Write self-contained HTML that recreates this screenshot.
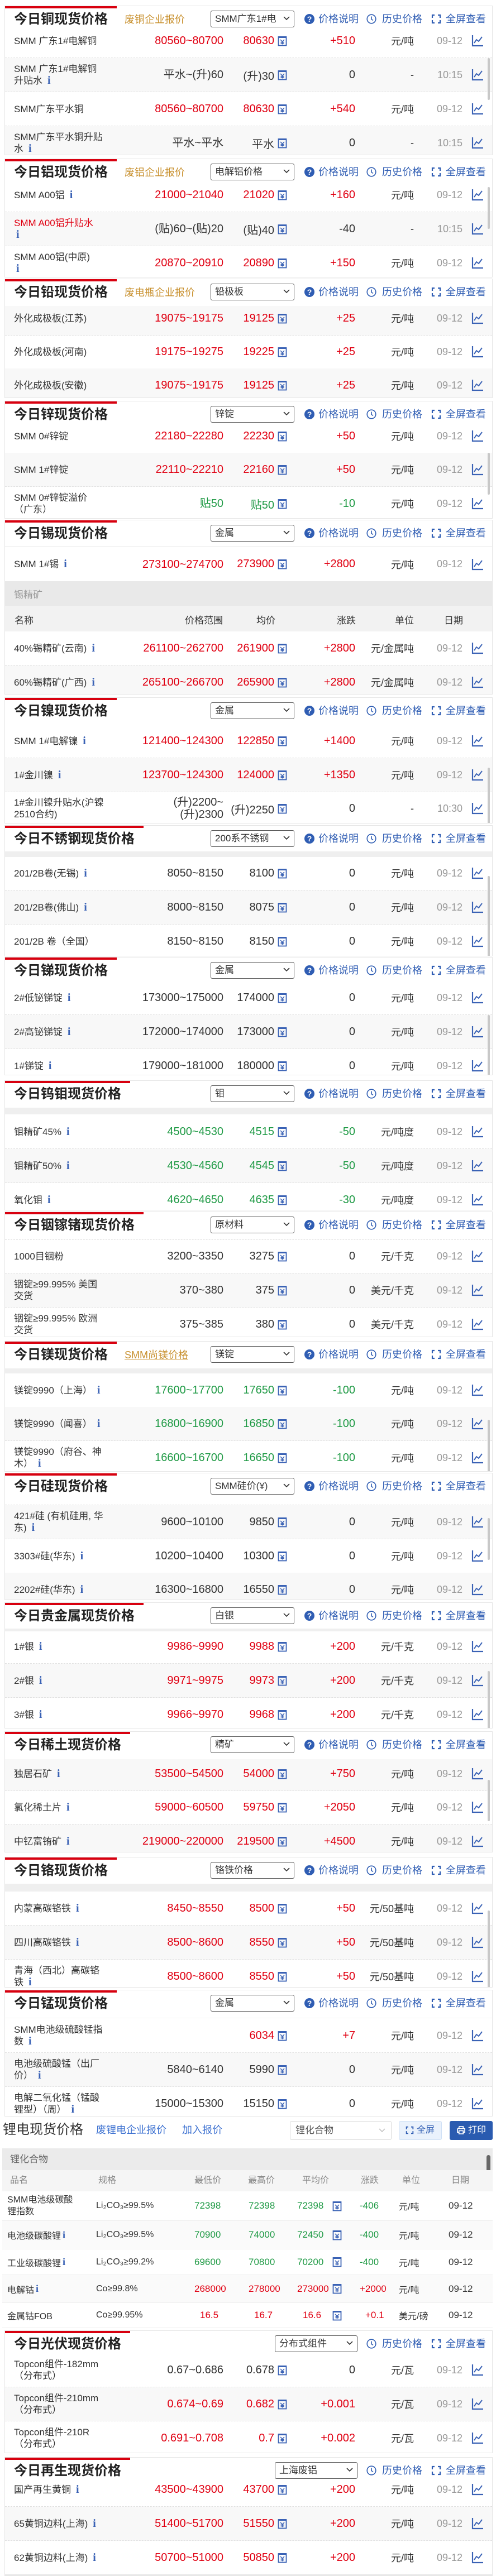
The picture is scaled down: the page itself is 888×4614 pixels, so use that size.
<!DOCTYPE html>
<html><head><meta charset="utf-8">
<style>
body{margin:0;width:888px;height:4614px;position:relative;background:#fff;font-family:"Liberation Sans","Noto Sans CJK SC",sans-serif;color:#333;overflow:hidden}
.s{position:absolute;left:8px;width:874px;border:1px solid #e6e6e6;box-sizing:border-box;overflow:hidden;background:#fff}
.rb{position:absolute;left:0;top:0;height:4px;background:#d8000f;z-index:3}
.h{position:absolute;left:0;top:0;width:100%;background:#fff;z-index:2}
.ti{position:absolute;left:16px;top:8px;font-size:24px;font-weight:bold;line-height:32px;color:#222;white-space:nowrap}
.ol{position:absolute;left:214px;top:12px;font-size:18px;color:#c8902e;line-height:24px;white-space:nowrap}
.sel{position:absolute;left:368px;top:8px;width:150px;height:30px;border:1px solid #555;border-radius:3px;box-sizing:border-box;font-size:17px;line-height:28px;padding-left:7px;overflow:hidden;white-space:nowrap;background:#fff}
.sel svg{position:absolute;right:7px;top:9px}
.hl{position:absolute;top:11px;font-size:18px;line-height:24px;color:#2f5db3;white-space:nowrap}
.hi{position:absolute;top:14px}
.band{position:absolute;left:0;width:100%;background:#efefef;z-index:1}
.r{position:absolute;left:0;width:100%;height:61px;border-bottom:1px dashed #e0e0e0;box-sizing:border-box}
.gr{background:#f8f8f8}
.c{position:absolute;top:0;height:100%;display:flex;align-items:center;white-space:nowrap}
.n{left:16px;font-size:17px;line-height:21px}
.g{right:481px;font-size:20px;text-align:right;line-height:22px}
.a{right:390px;font-size:20px}
.k{left:488px}
.d{right:245px;font-size:20px}
.u{right:140px;font-size:18px}
.t{right:53px;font-size:18px;color:#999}
.ch{left:835px}
.up .g,.up .a,.up .d{color:#e00012}
.dn .g,.dn .a,.dn .d{color:#1f9a45}
.i{font-family:"Liberation Serif",serif;font-weight:bold;color:#3a62b5;font-size:20px;margin-left:9px}
.red{color:#e00012}
.sb{position:absolute;right:4px;width:4px;background:#c8c8c8;border-radius:2px;z-index:3}
.ab{position:absolute;white-space:nowrap}
</style></head><body>
<svg width="0" height="0" style="position:absolute">
<defs>
<symbol id="cal" viewBox="0 0 17 19"><rect x="1.5" y="2" width="14" height="15.5" fill="none" stroke="#3a62b5" stroke-width="1.8"/><rect x="1.5" y="1" width="14" height="3" fill="#3a62b5"/><path d="M5 7 L8.5 10.5 L12 7 M8.5 10.5 V15.5 M5.5 11.5 H11.5 M5.5 13.5 H11.5" stroke="#3a62b5" stroke-width="1.5" fill="none"/></symbol>
<symbol id="chr" viewBox="0 0 22 22"><path d="M2 1 V20 H21" stroke="#3a62b5" stroke-width="2.2" fill="none"/><path d="M5 15 L9 9 L13 12 L19 4" stroke="#3a62b5" stroke-width="2" fill="none"/></symbol>
<symbol id="q" viewBox="0 0 18 18"><circle cx="9" cy="9" r="9" fill="#2f5db3"/><text x="9" y="14" text-anchor="middle" font-size="14" font-weight="bold" fill="#fff" font-family="Liberation Sans">?</text></symbol>
<symbol id="clk" viewBox="0 0 18 18"><circle cx="9" cy="9" r="7.8" fill="none" stroke="#2f5db3" stroke-width="1.6"/><path d="M9 4.5 V9.5 L12 11.5" stroke="#2f5db3" stroke-width="1.6" fill="none"/></symbol>
<symbol id="fs" viewBox="0 0 18 18"><path d="M2 7 V2 H6 M12 2 H16 V7 M16 11 V16 H12 M6 16 H2 V11" stroke="#2f5db3" stroke-width="2.2" fill="none"/></symbol>
<symbol id="chev" viewBox="0 0 12 8"><path d="M1 1 L6 6 L11 1" stroke="#333" stroke-width="1.6" fill="none"/></symbol>
</defs></svg>

<!-- 1 copper -->
<div class="s" style="top:10px;height:268px">
<div class="rb" style="width:200px"></div>
<div class="h" style="height:47px"><div class="ti">今日铜现货价格</div><div class="ol">废铜企业报价</div><div class="sel">SMM广东1#电<svg width="12" height="8"><use href="#chev"/></svg></div>
<svg class="hi" style="left:536px" width="18" height="18"><use href="#q"/></svg><div class="hl" style="left:561px">价格说明</div><svg class="hi" style="left:647px" width="18" height="18"><use href="#clk"/></svg><div class="hl" style="left:675px">历史价格</div><svg class="hi" style="left:763px" width="18" height="18"><use href="#fs"/></svg><div class="hl" style="left:789px">全屏查看</div></div>
<div class="sb" style="top:93px;height:75px"></div>
<div class="r up" style="top:32px"><div class="c n"><span>SMM 广东1#电解铜</span></div><div class="c g">80560~80700</div><div class="c a">80630</div><div class="c k"><svg width="17" height="19"><use href="#cal"/></svg></div><div class="c d">+510</div><div class="c u">元/吨</div><div class="c t">09-12</div><div class="c ch"><svg width="22" height="22"><use href="#chr"/></svg></div></div>
<div class="r gr" style="top:93px"><div class="c n"><span>SMM 广东1#电解铜<br>升贴水<b class="i">i</b></span></div><div class="c g">平水~(升)60</div><div class="c a">(升)30</div><div class="c k"><svg width="17" height="19"><use href="#cal"/></svg></div><div class="c d">0</div><div class="c u">-</div><div class="c t">10:15</div><div class="c ch"><svg width="22" height="22"><use href="#chr"/></svg></div></div>
<div class="r up" style="top:154px"><div class="c n"><span>SMM广东平水铜</span></div><div class="c g">80560~80700</div><div class="c a">80630</div><div class="c k"><svg width="17" height="19"><use href="#cal"/></svg></div><div class="c d">+540</div><div class="c u">元/吨</div><div class="c t">09-12</div><div class="c ch"><svg width="22" height="22"><use href="#chr"/></svg></div></div>
<div class="r gr" style="top:215px"><div class="c n"><span>SMM广东平水铜升贴<br>水<b class="i">i</b></span></div><div class="c g">平水~平水</div><div class="c a">平水</div><div class="c k"><svg width="17" height="19"><use href="#cal"/></svg></div><div class="c d">0</div><div class="c u">-</div><div class="c t">10:15</div><div class="c ch"><svg width="22" height="22"><use href="#chr"/></svg></div></div>
</div>

<!-- 2 aluminium -->
<div class="s" style="top:284px;height:213px">
<div class="rb" style="width:200px"></div>
<div class="h" style="height:47px"><div class="ti">今日铝现货价格</div><div class="ol">废铝企业报价</div><div class="sel">电解铝价格<svg width="12" height="8"><use href="#chev"/></svg></div>
<svg class="hi" style="left:536px" width="18" height="18"><use href="#q"/></svg><div class="hl" style="left:561px">价格说明</div><svg class="hi" style="left:647px" width="18" height="18"><use href="#clk"/></svg><div class="hl" style="left:675px">历史价格</div><svg class="hi" style="left:763px" width="18" height="18"><use href="#fs"/></svg><div class="hl" style="left:789px">全屏查看</div></div>
<div class="sb" style="top:50px;height:75px"></div>
<div class="r up" style="top:34px"><div class="c n"><span>SMM A00铝<b class="i">i</b></span></div><div class="c g">21000~21040</div><div class="c a">21020</div><div class="c k"><svg width="17" height="19"><use href="#cal"/></svg></div><div class="c d">+160</div><div class="c u">元/吨</div><div class="c t">09-12</div><div class="c ch"><svg width="22" height="22"><use href="#chr"/></svg></div></div>
<div class="r gr" style="top:95px"><div class="c n"><span><span class="red">SMM A00铝升贴水</span><br><b class="i" style="margin-left:4px">i</b></span></div><div class="c g">(贴)60~(贴)20</div><div class="c a">(贴)40</div><div class="c k"><svg width="17" height="19"><use href="#cal"/></svg></div><div class="c d">-40</div><div class="c u">-</div><div class="c t">10:15</div><div class="c ch"><svg width="22" height="22"><use href="#chr"/></svg></div></div>
<div class="r up" style="top:156px"><div class="c n"><span>SMM A00铝(中原)<br><b class="i" style="margin-left:4px">i</b></span></div><div class="c g">20870~20910</div><div class="c a">20890</div><div class="c k"><svg width="17" height="19"><use href="#cal"/></svg></div><div class="c d">+150</div><div class="c u">元/吨</div><div class="c t">09-12</div><div class="c ch"><svg width="22" height="22"><use href="#chr"/></svg></div></div>
</div>

<!-- 3 lead -->
<div class="s" style="top:499px;height:214px">
<div class="rb" style="width:200px"></div>
<div class="h" style="height:48px"><div class="ti">今日铅现货价格</div><div class="ol">废电瓶企业报价</div><div class="sel">铅极板<svg width="12" height="8"><use href="#chev"/></svg></div>
<svg class="hi" style="left:536px" width="18" height="18"><use href="#q"/></svg><div class="hl" style="left:561px">价格说明</div><svg class="hi" style="left:647px" width="18" height="18"><use href="#clk"/></svg><div class="hl" style="left:675px">历史价格</div><svg class="hi" style="left:763px" width="18" height="18"><use href="#fs"/></svg><div class="hl" style="left:789px">全屏查看</div></div>
<div class="r up gr" style="top:40px"><div class="c n"><span>外化成极板(江苏)</span></div><div class="c g">19075~19175</div><div class="c a">19125</div><div class="c k"><svg width="17" height="19"><use href="#cal"/></svg></div><div class="c d">+25</div><div class="c u">元/吨</div><div class="c t">09-12</div><div class="c ch"><svg width="22" height="22"><use href="#chr"/></svg></div></div>
<div class="r up" style="top:100px"><div class="c n"><span>外化成极板(河南)</span></div><div class="c g">19175~19275</div><div class="c a">19225</div><div class="c k"><svg width="17" height="19"><use href="#cal"/></svg></div><div class="c d">+25</div><div class="c u">元/吨</div><div class="c t">09-12</div><div class="c ch"><svg width="22" height="22"><use href="#chr"/></svg></div></div>
<div class="r up gr" style="top:160px"><div class="c n"><span>外化成极板(安徽)</span></div><div class="c g">19075~19175</div><div class="c a">19125</div><div class="c k"><svg width="17" height="19"><use href="#cal"/></svg></div><div class="c d">+25</div><div class="c u">元/吨</div><div class="c t">09-12</div><div class="c ch"><svg width="22" height="22"><use href="#chr"/></svg></div></div>
</div>

<!-- 4 zinc -->
<div class="s" style="top:718px;height:211px">
<div class="rb" style="width:200px"></div>
<div class="h" style="height:42px"><div class="ti">今日锌现货价格</div><div class="sel">锌锭<svg width="12" height="8"><use href="#chev"/></svg></div>
<svg class="hi" style="left:536px" width="18" height="18"><use href="#q"/></svg><div class="hl" style="left:561px">价格说明</div><svg class="hi" style="left:647px" width="18" height="18"><use href="#clk"/></svg><div class="hl" style="left:675px">历史价格</div><svg class="hi" style="left:763px" width="18" height="18"><use href="#fs"/></svg><div class="hl" style="left:789px">全屏查看</div></div>
<div class="sb" style="top:92px;height:75px"></div>
<div class="r up" style="top:32px"><div class="c n"><span>SMM 0#锌锭</span></div><div class="c g">22180~22280</div><div class="c a">22230</div><div class="c k"><svg width="17" height="19"><use href="#cal"/></svg></div><div class="c d">+50</div><div class="c u">元/吨</div><div class="c t">09-12</div><div class="c ch"><svg width="22" height="22"><use href="#chr"/></svg></div></div>
<div class="r up gr" style="top:92px"><div class="c n"><span>SMM 1#锌锭</span></div><div class="c g">22110~22210</div><div class="c a">22160</div><div class="c k"><svg width="17" height="19"><use href="#cal"/></svg></div><div class="c d">+50</div><div class="c u">元/吨</div><div class="c t">09-12</div><div class="c ch"><svg width="22" height="22"><use href="#chr"/></svg></div></div>
<div class="r dn" style="top:153px"><div class="c n"><span>SMM 0#锌锭溢价<br>（广东）</span></div><div class="c g">贴50</div><div class="c a">贴50</div><div class="c k"><svg width="17" height="19"><use href="#cal"/></svg></div><div class="c d">-10</div><div class="c u">元/吨</div><div class="c t">09-12</div><div class="c ch"><svg width="22" height="22"><use href="#chr"/></svg></div></div>
</div>

<!-- 5 tin -->
<div class="s" style="top:931px;height:313px">
<div class="rb" style="width:200px"></div>
<div class="h" style="height:46px;border-bottom:1px solid #eee"><div class="ti">今日锡现货价格</div><div class="sel">金属<svg width="12" height="8"><use href="#chev"/></svg></div>
<svg class="hi" style="left:536px" width="18" height="18"><use href="#q"/></svg><div class="hl" style="left:561px">价格说明</div><svg class="hi" style="left:647px" width="18" height="18"><use href="#clk"/></svg><div class="hl" style="left:675px">历史价格</div><svg class="hi" style="left:763px" width="18" height="18"><use href="#fs"/></svg><div class="hl" style="left:789px">全屏查看</div></div>
<div class="r up" style="top:48px;border:none"><div class="c n"><span>SMM 1#锡<b class="i">i</b></span></div><div class="c g">273100~274700</div><div class="c a">273900</div><div class="c k"><svg width="17" height="19"><use href="#cal"/></svg></div><div class="c d">+2800</div><div class="c u">元/吨</div><div class="c t">09-12</div><div class="c ch"><svg width="22" height="22"><use href="#chr"/></svg></div></div>
<div class="band" style="top:109px;height:44px;background:#e9e9e9"><span class="ab" style="left:16px;top:10px;font-size:17px;color:#999">锡精矿</span></div>
<div class="band" style="top:153px;height:46px;background:#f2f2f2;font-size:17px"><span class="ab" style="left:17px;top:12px">名称</span><span class="ab" style="left:322px;top:12px">价格范围</span><span class="ab" style="left:450px;top:12px">均价</span><span class="ab" style="left:594px;top:12px">涨跌</span><span class="ab" style="left:698px;top:12px">单位</span><span class="ab" style="left:786px;top:12px">日期</span></div>
<div class="r up" style="top:199px"><div class="c n"><span>40%锡精矿(云南)<b class="i">i</b></span></div><div class="c g">261100~262700</div><div class="c a">261900</div><div class="c k"><svg width="17" height="19"><use href="#cal"/></svg></div><div class="c d">+2800</div><div class="c u">元/金属吨</div><div class="c t">09-12</div><div class="c ch"><svg width="22" height="22"><use href="#chr"/></svg></div></div>
<div class="r up gr" style="top:260px"><div class="c n"><span>60%锡精矿(广西)<b class="i">i</b></span></div><div class="c g">265100~266700</div><div class="c a">265900</div><div class="c k"><svg width="17" height="19"><use href="#cal"/></svg></div><div class="c d">+2800</div><div class="c u">元/金属吨</div><div class="c t">09-12</div><div class="c ch"><svg width="22" height="22"><use href="#chr"/></svg></div></div>
</div>

<!-- 6 nickel -->
<div class="s" style="top:1249px;height:226px">
<div class="rb" style="width:200px"></div>
<div class="h" style="height:47px"><div class="ti">今日镍现货价格</div><div class="sel">金属<svg width="12" height="8"><use href="#chev"/></svg></div>
<svg class="hi" style="left:536px" width="18" height="18"><use href="#q"/></svg><div class="hl" style="left:561px">价格说明</div><svg class="hi" style="left:647px" width="18" height="18"><use href="#clk"/></svg><div class="hl" style="left:675px">历史价格</div><svg class="hi" style="left:763px" width="18" height="18"><use href="#fs"/></svg><div class="hl" style="left:789px">全屏查看</div></div>
<div class="sb" style="top:125px;height:101px"></div>
<div class="r up" style="top:47px"><div class="c n"><span>SMM 1#电解镍<b class="i">i</b></span></div><div class="c g">121400~124300</div><div class="c a">122850</div><div class="c k"><svg width="17" height="19"><use href="#cal"/></svg></div><div class="c d">+1400</div><div class="c u">元/吨</div><div class="c t">09-12</div><div class="c ch"><svg width="22" height="22"><use href="#chr"/></svg></div></div>
<div class="r up gr" style="top:108px"><div class="c n"><span>1#金川镍<b class="i">i</b></span></div><div class="c g">123700~124300</div><div class="c a">124000</div><div class="c k"><svg width="17" height="19"><use href="#cal"/></svg></div><div class="c d">+1350</div><div class="c u">元/吨</div><div class="c t">09-12</div><div class="c ch"><svg width="22" height="22"><use href="#chr"/></svg></div></div>
<div class="r" style="top:168px"><div class="c n"><span>1#金川镍升贴水(沪镍<br>2510合约)</span></div><div class="c g"><span>(升)2200~<br>(升)2300</span></div><div class="c a">(升)2250</div><div class="c k"><svg width="17" height="19"><use href="#cal"/></svg></div><div class="c d">0</div><div class="c u">-</div><div class="c t">10:30</div><div class="c ch"><svg width="22" height="22"><use href="#chr"/></svg></div></div>
</div>

<!-- 7 stainless -->
<div class="s" style="top:1478px;height:235px">
<div class="rb" style="width:248px"></div>
<div class="h" style="height:46px"><div class="ti">今日不锈钢现货价格</div><div class="sel">200系不锈钢<svg width="12" height="8"><use href="#chev"/></svg></div>
<svg class="hi" style="left:536px" width="18" height="18"><use href="#q"/></svg><div class="hl" style="left:561px">价格说明</div><svg class="hi" style="left:647px" width="18" height="18"><use href="#clk"/></svg><div class="hl" style="left:675px">历史价格</div><svg class="hi" style="left:763px" width="18" height="18"><use href="#fs"/></svg><div class="hl" style="left:789px">全屏查看</div></div>
<div class="band" style="top:46px;height:10px"></div>
<div class="sb" style="top:90px;height:145px"></div>
<div class="r" style="top:55px"><div class="c n"><span>201/2B卷(无锡)<b class="i">i</b></span></div><div class="c g">8050~8150</div><div class="c a">8100</div><div class="c k"><svg width="17" height="19"><use href="#cal"/></svg></div><div class="c d">0</div><div class="c u">元/吨</div><div class="c t">09-12</div><div class="c ch"><svg width="22" height="22"><use href="#chr"/></svg></div></div>
<div class="r gr" style="top:116px"><div class="c n"><span>201/2B卷(佛山)<b class="i">i</b></span></div><div class="c g">8000~8150</div><div class="c a">8075</div><div class="c k"><svg width="17" height="19"><use href="#cal"/></svg></div><div class="c d">0</div><div class="c u">元/吨</div><div class="c t">09-12</div><div class="c ch"><svg width="22" height="22"><use href="#chr"/></svg></div></div>
<div class="r" style="top:177px"><div class="c n"><span>201/2B 卷（全国）</span></div><div class="c g">8150~8150</div><div class="c a">8150</div><div class="c k"><svg width="17" height="19"><use href="#cal"/></svg></div><div class="c d">0</div><div class="c u">元/吨</div><div class="c t">09-12</div><div class="c ch"><svg width="22" height="22"><use href="#chr"/></svg></div></div>
</div>

<!-- 8 antimony -->
<div class="s" style="top:1714px;height:212px">
<div class="rb" style="width:200px"></div>
<div class="h" style="height:46px"><div class="ti">今日锑现货价格</div><div class="sel">金属<svg width="12" height="8"><use href="#chev"/></svg></div>
<svg class="hi" style="left:536px" width="18" height="18"><use href="#q"/></svg><div class="hl" style="left:561px">价格说明</div><svg class="hi" style="left:647px" width="18" height="18"><use href="#clk"/></svg><div class="hl" style="left:675px">历史价格</div><svg class="hi" style="left:763px" width="18" height="18"><use href="#fs"/></svg><div class="hl" style="left:789px">全屏查看</div></div>
<div class="sb" style="top:103px;height:109px"></div>
<div class="r" style="top:42px"><div class="c n"><span>2#低铋锑锭<b class="i">i</b></span></div><div class="c g">173000~175000</div><div class="c a">174000</div><div class="c k"><svg width="17" height="19"><use href="#cal"/></svg></div><div class="c d">0</div><div class="c u">元/吨</div><div class="c t">09-12</div><div class="c ch"><svg width="22" height="22"><use href="#chr"/></svg></div></div>
<div class="r gr" style="top:103px"><div class="c n"><span>2#高铋锑锭<b class="i">i</b></span></div><div class="c g">172000~174000</div><div class="c a">173000</div><div class="c k"><svg width="17" height="19"><use href="#cal"/></svg></div><div class="c d">0</div><div class="c u">元/吨</div><div class="c t">09-12</div><div class="c ch"><svg width="22" height="22"><use href="#chr"/></svg></div></div>
<div class="r" style="top:164px"><div class="c n"><span>1#锑锭<b class="i">i</b></span></div><div class="c g">179000~181000</div><div class="c a">180000</div><div class="c k"><svg width="17" height="19"><use href="#cal"/></svg></div><div class="c d">0</div><div class="c u">元/吨</div><div class="c t">09-12</div><div class="c ch"><svg width="22" height="22"><use href="#chr"/></svg></div></div>
</div>

<!-- 9 W/Mo -->
<div class="s" style="top:1935px;height:233px">
<div class="rb" style="width:224px"></div>
<div class="h" style="height:48px"><div class="ti">今日钨钼现货价格</div><div class="sel">钼<svg width="12" height="8"><use href="#chev"/></svg></div>
<svg class="hi" style="left:536px" width="18" height="18"><use href="#q"/></svg><div class="hl" style="left:561px">价格说明</div><svg class="hi" style="left:647px" width="18" height="18"><use href="#clk"/></svg><div class="hl" style="left:675px">历史价格</div><svg class="hi" style="left:763px" width="18" height="18"><use href="#fs"/></svg><div class="hl" style="left:789px">全屏查看</div></div>
<div class="band" style="top:48px;height:12px"></div>
<div class="r dn" style="top:61px"><div class="c n"><span>钼精矿45%<b class="i">i</b></span></div><div class="c g">4500~4530</div><div class="c a">4515</div><div class="c k"><svg width="17" height="19"><use href="#cal"/></svg></div><div class="c d">-50</div><div class="c u">元/吨度</div><div class="c t">09-12</div><div class="c ch"><svg width="22" height="22"><use href="#chr"/></svg></div></div>
<div class="r dn gr" style="top:122px"><div class="c n"><span>钼精矿50%<b class="i">i</b></span></div><div class="c g">4530~4560</div><div class="c a">4545</div><div class="c k"><svg width="17" height="19"><use href="#cal"/></svg></div><div class="c d">-50</div><div class="c u">元/吨度</div><div class="c t">09-12</div><div class="c ch"><svg width="22" height="22"><use href="#chr"/></svg></div></div>
<div class="r dn" style="top:183px"><div class="c n"><span>氧化钼<b class="i">i</b></span></div><div class="c g">4620~4650</div><div class="c a">4635</div><div class="c k"><svg width="17" height="19"><use href="#cal"/></svg></div><div class="c d">-30</div><div class="c u">元/吨度</div><div class="c t">09-12</div><div class="c ch"><svg width="22" height="22"><use href="#chr"/></svg></div></div>
</div>

<!-- 10 indium -->
<div class="s" style="top:2170px;height:225px">
<div class="rb" style="width:248px"></div>
<div class="h" style="height:49px;border-bottom:1px dashed #e0e0e0"><div class="ti">今日铟镓锗现货价格</div><div class="sel">原材料<svg width="12" height="8"><use href="#chev"/></svg></div>
<svg class="hi" style="left:536px" width="18" height="18"><use href="#q"/></svg><div class="hl" style="left:561px">价格说明</div><svg class="hi" style="left:647px" width="18" height="18"><use href="#clk"/></svg><div class="hl" style="left:675px">历史价格</div><svg class="hi" style="left:763px" width="18" height="18"><use href="#fs"/></svg><div class="hl" style="left:789px">全屏查看</div></div>
<div class="r" style="top:49px"><div class="c n"><span>1000目铟粉</span></div><div class="c g">3200~3350</div><div class="c a">3275</div><div class="c k"><svg width="17" height="19"><use href="#cal"/></svg></div><div class="c d">0</div><div class="c u">元/千克</div><div class="c t">09-12</div><div class="c ch"><svg width="22" height="22"><use href="#chr"/></svg></div></div>
<div class="r gr" style="top:110px"><div class="c n"><span>铟锭≥99.995% 美国<br>交货</span></div><div class="c g">370~380</div><div class="c a">375</div><div class="c k"><svg width="17" height="19"><use href="#cal"/></svg></div><div class="c d">0</div><div class="c u">美元/千克</div><div class="c t">09-12</div><div class="c ch"><svg width="22" height="22"><use href="#chr"/></svg></div></div>
<div class="r" style="top:171px"><div class="c n"><span>铟锭≥99.995% 欧洲<br>交货</span></div><div class="c g">375~385</div><div class="c a">380</div><div class="c k"><svg width="17" height="19"><use href="#cal"/></svg></div><div class="c d">0</div><div class="c u">美元/千克</div><div class="c t">09-12</div><div class="c ch"><svg width="22" height="22"><use href="#chr"/></svg></div></div>
</div>

<!-- 11 Mg -->
<div class="s" style="top:2402px;height:234px">
<div class="rb" style="width:200px"></div>
<div class="h" style="height:48px"><div class="ti">今日镁现货价格</div><div class="ol" style="text-decoration:underline">SMM尚镁价格</div><div class="sel">镁锭<svg width="12" height="8"><use href="#chev"/></svg></div>
<svg class="hi" style="left:536px" width="18" height="18"><use href="#q"/></svg><div class="hl" style="left:561px">价格说明</div><svg class="hi" style="left:647px" width="18" height="18"><use href="#clk"/></svg><div class="hl" style="left:675px">历史价格</div><svg class="hi" style="left:763px" width="18" height="18"><use href="#fs"/></svg><div class="hl" style="left:789px">全屏查看</div></div>
<div class="band" style="top:48px;height:9px"></div>
<div class="sb" style="top:140px;height:94px"></div>
<div class="r dn" style="top:57px"><div class="c n"><span>镁锭9990（上海）<b class="i">i</b></span></div><div class="c g">17600~17700</div><div class="c a">17650</div><div class="c k"><svg width="17" height="19"><use href="#cal"/></svg></div><div class="c d">-100</div><div class="c u">元/吨</div><div class="c t">09-12</div><div class="c ch"><svg width="22" height="22"><use href="#chr"/></svg></div></div>
<div class="r dn gr" style="top:117px"><div class="c n"><span>镁锭9990（闻喜）<b class="i">i</b></span></div><div class="c g">16800~16900</div><div class="c a">16850</div><div class="c k"><svg width="17" height="19"><use href="#cal"/></svg></div><div class="c d">-100</div><div class="c u">元/吨</div><div class="c t">09-12</div><div class="c ch"><svg width="22" height="22"><use href="#chr"/></svg></div></div>
<div class="r dn" style="top:178px"><div class="c n"><span>镁锭9990（府谷、神<br>木）<b class="i">i</b></span></div><div class="c g">16600~16700</div><div class="c a">16650</div><div class="c k"><svg width="17" height="19"><use href="#cal"/></svg></div><div class="c d">-100</div><div class="c u">元/吨</div><div class="c t">09-12</div><div class="c ch"><svg width="22" height="22"><use href="#chr"/></svg></div></div>
</div>

<!-- 12 Si -->
<div class="s" style="top:2638px;height:228px">
<div class="rb" style="width:200px"></div>
<div class="h" style="height:56px;border-bottom:1px dashed #e0e0e0"><div class="ti">今日硅现货价格</div><div class="sel">SMM硅价(¥)<svg width="12" height="8"><use href="#chev"/></svg></div>
<svg class="hi" style="left:536px" width="18" height="18"><use href="#q"/></svg><div class="hl" style="left:561px">价格说明</div><svg class="hi" style="left:647px" width="18" height="18"><use href="#clk"/></svg><div class="hl" style="left:675px">历史价格</div><svg class="hi" style="left:763px" width="18" height="18"><use href="#fs"/></svg><div class="hl" style="left:789px">全屏查看</div></div>
<div class="sb" style="top:80px;height:75px"></div>
<div class="r gr" style="top:57px"><div class="c n"><span>421#硅 (有机硅用, 华<br>东)<b class="i">i</b></span></div><div class="c g">9600~10100</div><div class="c a">9850</div><div class="c k"><svg width="17" height="19"><use href="#cal"/></svg></div><div class="c d">0</div><div class="c u">元/吨</div><div class="c t">09-12</div><div class="c ch"><svg width="22" height="22"><use href="#chr"/></svg></div></div>
<div class="r" style="top:118px"><div class="c n"><span>3303#硅(华东)<b class="i">i</b></span></div><div class="c g">10200~10400</div><div class="c a">10300</div><div class="c k"><svg width="17" height="19"><use href="#cal"/></svg></div><div class="c d">0</div><div class="c u">元/吨</div><div class="c t">09-12</div><div class="c ch"><svg width="22" height="22"><use href="#chr"/></svg></div></div>
<div class="r gr" style="top:178px"><div class="c n"><span>2202#硅(华东)<b class="i">i</b></span></div><div class="c g">16300~16800</div><div class="c a">16550</div><div class="c k"><svg width="17" height="19"><use href="#cal"/></svg></div><div class="c d">0</div><div class="c u">元/吨</div><div class="c t">09-12</div><div class="c ch"><svg width="22" height="22"><use href="#chr"/></svg></div></div>
</div>

<!-- 13 precious -->
<div class="s" style="top:2870px;height:226px">
<div class="rb" style="width:248px"></div>
<div class="h" style="height:46px"><div class="ti">今日贵金属现货价格</div><div class="sel">白银<svg width="12" height="8"><use href="#chev"/></svg></div>
<svg class="hi" style="left:536px" width="18" height="18"><use href="#q"/></svg><div class="hl" style="left:561px">价格说明</div><svg class="hi" style="left:647px" width="18" height="18"><use href="#clk"/></svg><div class="hl" style="left:675px">历史价格</div><svg class="hi" style="left:763px" width="18" height="18"><use href="#fs"/></svg><div class="hl" style="left:789px">全屏查看</div></div>
<div class="band" style="top:46px;height:5px"></div>
<div class="sb" style="top:122px;height:104px"></div>
<div class="r up" style="top:48px"><div class="c n"><span>1#银<b class="i">i</b></span></div><div class="c g">9986~9990</div><div class="c a">9988</div><div class="c k"><svg width="17" height="19"><use href="#cal"/></svg></div><div class="c d">+200</div><div class="c u">元/千克</div><div class="c t">09-12</div><div class="c ch"><svg width="22" height="22"><use href="#chr"/></svg></div></div>
<div class="r up gr" style="top:109px"><div class="c n"><span>2#银<b class="i">i</b></span></div><div class="c g">9971~9975</div><div class="c a">9973</div><div class="c k"><svg width="17" height="19"><use href="#cal"/></svg></div><div class="c d">+200</div><div class="c u">元/千克</div><div class="c t">09-12</div><div class="c ch"><svg width="22" height="22"><use href="#chr"/></svg></div></div>
<div class="r up" style="top:170px"><div class="c n"><span>3#银<b class="i">i</b></span></div><div class="c g">9966~9970</div><div class="c a">9968</div><div class="c k"><svg width="17" height="19"><use href="#cal"/></svg></div><div class="c d">+200</div><div class="c u">元/千克</div><div class="c t">09-12</div><div class="c ch"><svg width="22" height="22"><use href="#chr"/></svg></div></div>
</div>

<!-- 14 rare earth -->
<div class="s" style="top:3101px;height:217px">
<div class="rb" style="width:224px"></div>
<div class="h" style="height:49px"><div class="ti">今日稀土现货价格</div><div class="sel">精矿<svg width="12" height="8"><use href="#chev"/></svg></div>
<svg class="hi" style="left:536px" width="18" height="18"><use href="#q"/></svg><div class="hl" style="left:561px">价格说明</div><svg class="hi" style="left:647px" width="18" height="18"><use href="#clk"/></svg><div class="hl" style="left:675px">历史价格</div><svg class="hi" style="left:763px" width="18" height="18"><use href="#fs"/></svg><div class="hl" style="left:789px">全屏查看</div></div>
<div class="sb" style="top:86px;height:74px"></div>
<div class="r up gr" style="top:45px"><div class="c n"><span>独居石矿<b class="i">i</b></span></div><div class="c g">53500~54500</div><div class="c a">54000</div><div class="c k"><svg width="17" height="19"><use href="#cal"/></svg></div><div class="c d">+750</div><div class="c u">元/吨</div><div class="c t">09-12</div><div class="c ch"><svg width="22" height="22"><use href="#chr"/></svg></div></div>
<div class="r up" style="top:105px"><div class="c n"><span>氯化稀土片<b class="i">i</b></span></div><div class="c g">59000~60500</div><div class="c a">59750</div><div class="c k"><svg width="17" height="19"><use href="#cal"/></svg></div><div class="c d">+2050</div><div class="c u">元/吨</div><div class="c t">09-12</div><div class="c ch"><svg width="22" height="22"><use href="#chr"/></svg></div></div>
<div class="r up gr" style="top:166px"><div class="c n"><span>中钇富铕矿<b class="i">i</b></span></div><div class="c g">219000~220000</div><div class="c a">219500</div><div class="c k"><svg width="17" height="19"><use href="#cal"/></svg></div><div class="c d">+4500</div><div class="c u">元/吨</div><div class="c t">09-12</div><div class="c ch"><svg width="22" height="22"><use href="#chr"/></svg></div></div>
</div>

<!-- 15 Cr -->
<div class="s" style="top:3326px;height:234px">
<div class="rb" style="width:200px"></div>
<div class="h" style="height:47px"><div class="ti">今日铬现货价格</div><div class="sel">铬铁价格<svg width="12" height="8"><use href="#chev"/></svg></div>
<svg class="hi" style="left:536px" width="18" height="18"><use href="#q"/></svg><div class="hl" style="left:561px">价格说明</div><svg class="hi" style="left:647px" width="18" height="18"><use href="#clk"/></svg><div class="hl" style="left:675px">历史价格</div><svg class="hi" style="left:763px" width="18" height="18"><use href="#fs"/></svg><div class="hl" style="left:789px">全屏查看</div></div>
<div class="band" style="top:47px;height:14px"></div>
<div class="sb" style="top:95px;height:139px"></div>
<div class="r up" style="top:61px"><div class="c n"><span>内蒙高碳铬铁<b class="i">i</b></span></div><div class="c g">8450~8550</div><div class="c a">8500</div><div class="c k"><svg width="17" height="19"><use href="#cal"/></svg></div><div class="c d">+50</div><div class="c u">元/50基吨</div><div class="c t">09-12</div><div class="c ch"><svg width="22" height="22"><use href="#chr"/></svg></div></div>
<div class="r up gr" style="top:122px"><div class="c n"><span>四川高碳铬铁<b class="i">i</b></span></div><div class="c g">8500~8600</div><div class="c a">8550</div><div class="c k"><svg width="17" height="19"><use href="#cal"/></svg></div><div class="c d">+50</div><div class="c u">元/50基吨</div><div class="c t">09-12</div><div class="c ch"><svg width="22" height="22"><use href="#chr"/></svg></div></div>
<div class="r up" style="top:183px"><div class="c n"><span>青海（西北）高碳铬<br>铁<b class="i">i</b></span></div><div class="c g">8500~8600</div><div class="c a">8550</div><div class="c k"><svg width="17" height="19"><use href="#cal"/></svg></div><div class="c d">+50</div><div class="c u">元/50基吨</div><div class="c t">09-12</div><div class="c ch"><svg width="22" height="22"><use href="#chr"/></svg></div></div>
</div>

<!-- 16 Mn -->
<div class="s" style="top:3564px;height:227px">
<div class="rb" style="width:200px"></div>
<div class="h" style="height:49px;border-bottom:1px solid #eee"><div class="ti">今日锰现货价格</div><div class="sel">金属<svg width="12" height="8"><use href="#chev"/></svg></div>
<svg class="hi" style="left:536px" width="18" height="18"><use href="#q"/></svg><div class="hl" style="left:561px">价格说明</div><svg class="hi" style="left:647px" width="18" height="18"><use href="#clk"/></svg><div class="hl" style="left:675px">历史价格</div><svg class="hi" style="left:763px" width="18" height="18"><use href="#fs"/></svg><div class="hl" style="left:789px">全屏查看</div></div>
<div class="r up" style="top:51px"><div class="c n"><span>SMM电池级硫酸锰指<br>数<b class="i">i</b></span></div><div class="c a">6034</div><div class="c k"><svg width="17" height="19"><use href="#cal"/></svg></div><div class="c d">+7</div><div class="c u">元/吨</div><div class="c t">09-12</div><div class="c ch"><svg width="22" height="22"><use href="#chr"/></svg></div></div>
<div class="r gr" style="top:112px"><div class="c n"><span>电池级硫酸锰（出厂<br>价）<b class="i">i</b></span></div><div class="c g">5840~6140</div><div class="c a">5990</div><div class="c k"><svg width="17" height="19"><use href="#cal"/></svg></div><div class="c d">0</div><div class="c u">元/吨</div><div class="c t">09-12</div><div class="c ch"><svg width="22" height="22"><use href="#chr"/></svg></div></div>
<div class="r" style="top:173px"><div class="c n"><span>电解二氧化锰（锰酸<br>锂型）（周）<b class="i">i</b></span></div><div class="c g">15000~15300</div><div class="c a">15150</div><div class="c k"><svg width="17" height="19"><use href="#cal"/></svg></div><div class="c d">0</div><div class="c u">元/吨</div><div class="c t">09-12</div><div class="c ch"><svg width="22" height="22"><use href="#chr"/></svg></div></div>
</div>

<!-- 17 lithium -->
<div class="ab" style="left:5px;top:3799px;font-size:24px;line-height:32px;color:#333">锂电现货价格</div>
<div class="ab" style="left:172px;top:3803px;font-size:18px;line-height:24px;color:#3a6fd0">废锂电企业报价</div>
<div class="ab" style="left:326px;top:3803px;font-size:18px;line-height:24px;color:#3a6fd0">加入报价</div>
<div class="ab" style="left:519px;top:3799px;width:182px;height:34px;border:1px solid #dcdcdc;border-radius:3px;box-sizing:border-box;font-size:17px;line-height:32px;padding-left:9px;color:#555">锂化合物<svg style="position:absolute;right:10px;top:12px" width="12" height="8"><path d="M1 1 L6 6 L11 1" stroke="#bbb" stroke-width="1.4" fill="none"/></svg></div>
<div class="ab" style="left:714px;top:3799px;width:77px;height:34px;border:1px solid #cfe0f5;border-radius:3px;box-sizing:border-box;background:#eaf2fc;font-size:16px;line-height:32px;color:#2f5db3;padding-left:11px"><svg style="vertical-align:-3px;margin-right:5px" width="15" height="15" viewBox="0 0 18 18"><use href="#fs"/></svg>全屏</div>
<div class="ab" style="left:805px;top:3799px;width:77px;height:34px;border-radius:3px;background:#2a5bb0;font-size:16px;line-height:34px;color:#fff;padding-left:13px;box-sizing:border-box"><svg style="vertical-align:-3px;margin-right:5px" width="15" height="15" viewBox="0 0 16 16"><path d="M4 1 H12 V5 M4 5 V1 M1 5 H15 V12 H12 M4 12 H1 V5 M4 9 H12 V15 H4 Z" stroke="#fff" stroke-width="1.8" fill="none"/></svg>打印</div>
<div class="ab" style="left:4px;top:3848px;width:878px;height:39px;background:#ebebeb;font-size:17px;line-height:39px;color:#666"><span style="margin-left:14px">锂化合物</span></div>
<div class="ab" style="left:871px;top:3860px;width:7px;height:32px;background:#666;border-radius:4px"></div>
<div class="ab" style="left:4px;top:3887px;width:878px;height:38px;background:#f5f5f5;font-size:16px;line-height:38px;color:#888">
<span class="ab" style="left:14px">品名</span><span class="ab" style="left:172px">规格</span><span class="ab" style="left:344px">最低价</span><span class="ab" style="left:440px">最高价</span><span class="ab" style="left:537px">平均价</span><span class="ab" style="left:642px">涨跌</span><span class="ab" style="left:716px">单位</span><span class="ab" style="left:804px">日期</span></div>
<style>
.lr{position:absolute;left:4px;width:878px;border-bottom:1px solid #eee;box-sizing:border-box;font-size:16px}
.lr>div{position:absolute;top:0;height:100%;display:flex;align-items:center;white-space:nowrap}
.lg{color:#1f9a45}.lrd{color:#e00012}
</style>
<div class="lr" style="top:3925px;height:53px"><div style="left:9px;line-height:21px"><span>SMM电池级碳酸<br>锂指数</span></div><div style="left:168px">Li₂CO₃≥99.5%</div><div class="lg" style="left:344px;font-size:17px">72398</div><div class="lg" style="left:441px;font-size:17px">72398</div><div class="lg" style="left:528px;font-size:17px">72398</div><div style="left:591px"><svg width="17" height="19"><use href="#cal"/></svg></div><div class="lg" style="left:640px;font-size:17px">-406</div><div style="left:710px">元/吨</div><div style="left:799px;font-size:17px">09-12</div></div>
<div class="lr" style="top:3978px;height:51px;background:#fafafa"><div style="left:9px">电池级碳酸锂<b class="i" style="margin-left:3px;font-size:18px">i</b></div><div style="left:168px">Li₂CO₃≥99.5%</div><div class="lg" style="left:344px;font-size:17px">70900</div><div class="lg" style="left:441px;font-size:17px">74000</div><div class="lg" style="left:528px;font-size:17px">72450</div><div style="left:591px"><svg width="17" height="19"><use href="#cal"/></svg></div><div class="lg" style="left:640px;font-size:17px">-400</div><div style="left:710px">元/吨</div><div style="left:799px;font-size:17px">09-12</div></div>
<div class="lr" style="top:4029px;height:46px"><div style="left:9px">工业级碳酸锂<b class="i" style="margin-left:3px;font-size:18px">i</b></div><div style="left:168px">Li₂CO₃≥99.2%</div><div class="lg" style="left:344px;font-size:17px">69600</div><div class="lg" style="left:441px;font-size:17px">70800</div><div class="lg" style="left:528px;font-size:17px">70200</div><div style="left:591px"><svg width="17" height="19"><use href="#cal"/></svg></div><div class="lg" style="left:640px;font-size:17px">-400</div><div style="left:710px">元/吨</div><div style="left:799px;font-size:17px">09-12</div></div>
<div class="lr" style="top:4075px;height:50px;background:#fafafa"><div style="left:9px">电解钴<b class="i" style="margin-left:3px;font-size:18px">i</b></div><div style="left:168px">Co≥99.8%</div><div class="lrd" style="left:344px;font-size:17px">268000</div><div class="lrd" style="left:441px;font-size:17px">278000</div><div class="lrd" style="left:528px;font-size:17px">273000</div><div style="left:591px"><svg width="17" height="19"><use href="#cal"/></svg></div><div class="lrd" style="left:640px;font-size:17px">+2000</div><div style="left:710px">元/吨</div><div style="left:799px;font-size:17px">09-12</div></div>
<div class="lr" style="top:4125px;height:45px"><div style="left:9px">金属钴FOB</div><div style="left:168px">Co≥99.95%</div><div class="lrd" style="left:354px;font-size:17px">16.5</div><div class="lrd" style="left:451px;font-size:17px">16.7</div><div class="lrd" style="left:538px;font-size:17px">16.6</div><div style="left:591px"><svg width="17" height="19"><use href="#cal"/></svg></div><div class="lrd" style="left:650px;font-size:17px">+0.1</div><div style="left:710px">美元/磅</div><div style="left:799px;font-size:17px">09-12</div></div>

<!-- 18 PV -->
<div class="s" style="top:4174px;height:220px">
<div class="rb" style="width:224px"></div>
<div class="h" style="height:40px"><div class="ti">今日光伏现货价格</div><div class="sel" style="left:483px;width:148px">分布式组件<svg width="12" height="8"><use href="#chev"/></svg></div>
<svg class="hi" style="left:647px" width="18" height="18"><use href="#clk"/></svg><div class="hl" style="left:675px">历史价格</div><svg class="hi" style="left:763px" width="18" height="18"><use href="#fs"/></svg><div class="hl" style="left:789px">全屏查看</div></div>
<div class="r" style="top:40px"><div class="c n"><span>Topcon组件-182mm<br>（分布式）</span></div><div class="c g">0.67~0.686</div><div class="c a">0.678</div><div class="c k"><svg width="17" height="19"><use href="#cal"/></svg></div><div class="c d">0</div><div class="c u">元/瓦</div><div class="c t">09-12</div><div class="c ch"><svg width="22" height="22"><use href="#chr"/></svg></div></div>
<div class="r up gr" style="top:101px"><div class="c n"><span>Topcon组件-210mm<br>（分布式）</span></div><div class="c g">0.674~0.69</div><div class="c a">0.682</div><div class="c k"><svg width="17" height="19"><use href="#cal"/></svg></div><div class="c d">+0.001</div><div class="c u">元/瓦</div><div class="c t">09-12</div><div class="c ch"><svg width="22" height="22"><use href="#chr"/></svg></div></div>
<div class="r up" style="top:162px"><div class="c n"><span>Topcon组件-210R<br>（分布式）</span></div><div class="c g">0.691~0.708</div><div class="c a">0.7</div><div class="c k"><svg width="17" height="19"><use href="#cal"/></svg></div><div class="c d">+0.002</div><div class="c u">元/瓦</div><div class="c t">09-12</div><div class="c ch"><svg width="22" height="22"><use href="#chr"/></svg></div></div>
</div>

<!-- 19 recycled -->
<div class="s" style="top:4401px;height:213px;border-bottom:none">
<div class="rb" style="width:224px"></div>
<div class="h" style="height:41px"><div class="ti">今日再生现货价格</div><div class="sel" style="left:483px;width:148px">上海废铝<svg width="12" height="8"><use href="#chev"/></svg></div>
<svg class="hi" style="left:647px" width="18" height="18"><use href="#clk"/></svg><div class="hl" style="left:675px">历史价格</div><svg class="hi" style="left:763px" width="18" height="18"><use href="#fs"/></svg><div class="hl" style="left:789px">全屏查看</div></div>
<div class="r up" style="top:27px"><div class="c n"><span>国产再生黄铜<b class="i">i</b></span></div><div class="c g">43500~43900</div><div class="c a">43700</div><div class="c k"><svg width="17" height="19"><use href="#cal"/></svg></div><div class="c d">+200</div><div class="c u">元/吨</div><div class="c t">09-12</div><div class="c ch"><svg width="22" height="22"><use href="#chr"/></svg></div></div>
<div class="r up gr" style="top:88px"><div class="c n"><span>65黄铜边料(上海)<b class="i">i</b></span></div><div class="c g">51400~51700</div><div class="c a">51550</div><div class="c k"><svg width="17" height="19"><use href="#cal"/></svg></div><div class="c d">+200</div><div class="c u">元/吨</div><div class="c t">09-12</div><div class="c ch"><svg width="22" height="22"><use href="#chr"/></svg></div></div>
<div class="r up" style="top:149px"><div class="c n"><span>62黄铜边料(上海)<b class="i">i</b></span></div><div class="c g">50700~51000</div><div class="c a">50850</div><div class="c k"><svg width="17" height="19"><use href="#cal"/></svg></div><div class="c d">+200</div><div class="c u">元/吨</div><div class="c t">09-12</div><div class="c ch"><svg width="22" height="22"><use href="#chr"/></svg></div></div>
<div class="band" style="top:209px;height:4px;background:#e8e8e8"></div>
</div>
</body></html>
